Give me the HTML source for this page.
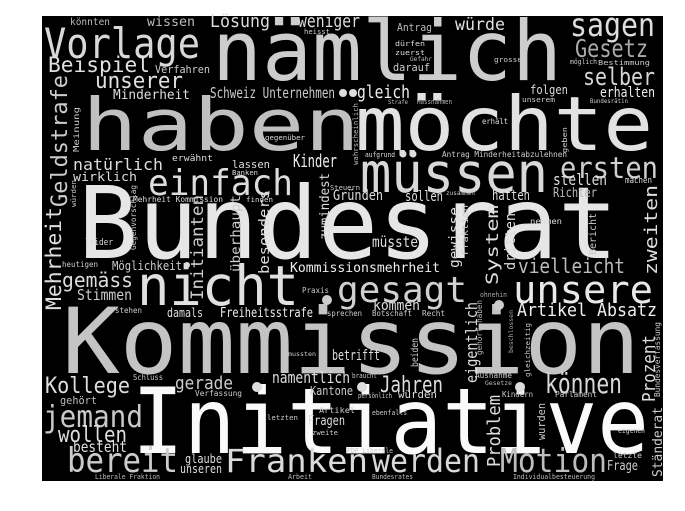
<!DOCTYPE html>
<html><head><meta charset="utf-8"><style>
html,body{margin:0;padding:0;background:#fff;width:685px;height:511px;overflow:hidden}
svg{display:block}
text{font-family:"DejaVu Sans Mono","Liberation Mono",monospace;}
</style></head><body>
<svg width="685" height="511" viewBox="0 0 685 511" xmlns="http://www.w3.org/2000/svg">
<rect x="0" y="0" width="685" height="511" fill="#fff"/>
<rect x="42" y="16" width="621" height="465" fill="#000"/>
<g lengthAdjust="spacingAndGlyphs">
<!-- big words -->
<text x="78" y="258" font-size="100" fill="#e6e6e6" textLength="540" lengthAdjust="spacingAndGlyphs">Bundesrat</text>
<text x="62" y="373" font-size="91" fill="#c4c4c4" textLength="578" lengthAdjust="spacingAndGlyphs">Kommission</text>
<text x="132" y="453" font-size="91" fill="#fafafa" textLength="517" lengthAdjust="spacingAndGlyphs">Initiative</text>
<text x="82" y="150" font-size="72" fill="#c0c0c0" textLength="278" lengthAdjust="spacingAndGlyphs">haben</text>
<text x="355" y="150" font-size="75" fill="#e2e2e2" textLength="298" lengthAdjust="spacingAndGlyphs">möchte</text>
<text x="212" y="80" font-size="83" fill="#cdcdcd" textLength="350" lengthAdjust="spacingAndGlyphs">nämlich</text>
<text x="360" y="192" font-size="55" fill="#d8d8d8" textLength="188" lengthAdjust="spacingAndGlyphs">müssen</text>
<text x="137" y="305" font-size="55" fill="#e0e0e0" textLength="162" lengthAdjust="spacingAndGlyphs">nicht</text>
<text x="337" y="302" font-size="36" fill="#d0d0d0" textLength="130" lengthAdjust="spacingAndGlyphs">gesagt</text>
<text x="513" y="303" font-size="38" fill="#e8e8e8" textLength="140" lengthAdjust="spacingAndGlyphs">unsere</text>
<text x="148" y="195" font-size="36" fill="#dcdcdc" textLength="145" lengthAdjust="spacingAndGlyphs">einfach</text>
<text x="44" y="58" font-size="42" fill="#d8d8d8" textLength="156" lengthAdjust="spacingAndGlyphs">Vorlage</text>
<text x="570" y="36" font-size="32" fill="#dcdcdc" textLength="85" lengthAdjust="spacingAndGlyphs">sagen</text>
<text x="560" y="178" font-size="29" fill="#cfcfcf" textLength="98" lengthAdjust="spacingAndGlyphs">ersten</text>
<text x="67" y="472" font-size="34" fill="#cccccc" textLength="111" lengthAdjust="spacingAndGlyphs">bereit</text>
<text x="225" y="472" font-size="32" fill="#dadada" textLength="143" lengthAdjust="spacingAndGlyphs">Franken</text>
<text x="372" y="472" font-size="32" fill="#d8d8d8" textLength="108" lengthAdjust="spacingAndGlyphs">werden</text>
<text x="500" y="472" font-size="33" fill="#bdbdbd" textLength="107" lengthAdjust="spacingAndGlyphs">Motion</text>
<text x="43" y="427" font-size="30" fill="#c8c8c8" textLength="100" lengthAdjust="spacingAndGlyphs">jemand</text>
<text x="545" y="393" font-size="28" fill="#d8d8d8" textLength="77" lengthAdjust="spacingAndGlyphs">können</text>
<!-- medium -->
<text x="575" y="57" font-size="25" fill="#aaaaaa" textLength="73" lengthAdjust="spacingAndGlyphs">Gesetz</text>
<text x="583" y="85" font-size="24" fill="#d4d4d4" textLength="72" lengthAdjust="spacingAndGlyphs">selber</text>
<text x="48" y="72" font-size="21" fill="#e0e0e0" textLength="102" lengthAdjust="spacingAndGlyphs">Beispiel</text>
<text x="95" y="88" font-size="22" fill="#e0e0e0" textLength="88" lengthAdjust="spacingAndGlyphs">unserer</text>
<text x="210" y="27" font-size="18" fill="#dcdcdc" textLength="60" lengthAdjust="spacingAndGlyphs">Lösung</text>
<text x="298" y="27" font-size="18" fill="#dcdcdc" textLength="62" lengthAdjust="spacingAndGlyphs">weniger</text>
<text x="455" y="30" font-size="17" fill="#e0e0e0" textLength="50" lengthAdjust="spacingAndGlyphs">würde</text>
<text x="147" y="26" font-size="13" fill="#bbbbbb" textLength="48" lengthAdjust="spacingAndGlyphs">wissen</text>
<text x="70" y="25" font-size="10" fill="#bbbbbb" textLength="40" lengthAdjust="spacingAndGlyphs">könnten</text>
<text x="397" y="31" font-size="11" fill="#bbbbbb" textLength="35" lengthAdjust="spacingAndGlyphs">Antrag</text>
<text x="304" y="34" font-size="7" fill="#cccccc" textLength="26" lengthAdjust="spacingAndGlyphs">heisst</text>
<text x="155" y="73" font-size="11" fill="#cccccc" textLength="55" lengthAdjust="spacingAndGlyphs">Verfahren</text>
<text x="113" y="99" font-size="13" fill="#dddddd" textLength="77" lengthAdjust="spacingAndGlyphs">Minderheit</text>
<text x="210" y="98" font-size="15" fill="#cccccc" textLength="125" lengthAdjust="spacingAndGlyphs">Schweiz Unternehmen</text>
<circle cx="343" cy="93" r="4" fill="#ddd"/><circle cx="353" cy="93" r="4" fill="#ddd"/>
<text x="357" y="98" font-size="18" fill="#eeeeee" textLength="53" lengthAdjust="spacingAndGlyphs">gleich</text>
<text x="388" y="104" font-size="6" fill="#bbbbbb" textLength="20" lengthAdjust="spacingAndGlyphs">Strafe</text>
<text x="417" y="104" font-size="7" fill="#bbbbbb" textLength="35" lengthAdjust="spacingAndGlyphs">Massnahmen</text>
<text x="530" y="94" font-size="12" fill="#dddddd" textLength="38" lengthAdjust="spacingAndGlyphs">folgen</text>
<text x="522" y="102" font-size="7" fill="#cccccc" textLength="33" lengthAdjust="spacingAndGlyphs">unserem</text>
<text x="600" y="97" font-size="14" fill="#eeeeee" textLength="55" lengthAdjust="spacingAndGlyphs">erhalten</text>
<text x="590" y="103" font-size="6" fill="#cccccc" textLength="38" lengthAdjust="spacingAndGlyphs">Bundesrätin</text>
<text x="395" y="46" font-size="7" fill="#dddddd" textLength="30" lengthAdjust="spacingAndGlyphs">dürfen</text>
<text x="395" y="55" font-size="7" fill="#dddddd" textLength="30" lengthAdjust="spacingAndGlyphs">zuerst</text>
<text x="410" y="61" font-size="6" fill="#bbbbbb" textLength="22" lengthAdjust="spacingAndGlyphs">Gefahr</text>
<text x="393" y="71" font-size="11" fill="#cccccc" textLength="37" lengthAdjust="spacingAndGlyphs">darauf</text>
<text x="494" y="62" font-size="7" fill="#cccccc" textLength="28" lengthAdjust="spacingAndGlyphs">grosse</text>
<text x="570" y="64" font-size="7" fill="#cccccc" textLength="27" lengthAdjust="spacingAndGlyphs">möglich</text>
<text x="598" y="65" font-size="7" fill="#cccccc" textLength="52" lengthAdjust="spacingAndGlyphs">Bestimmung</text>
<text x="73" y="170" font-size="16" fill="#dddddd" textLength="90" lengthAdjust="spacingAndGlyphs">natürlich</text>
<text x="73" y="181" font-size="12" fill="#dddddd" textLength="64" lengthAdjust="spacingAndGlyphs">wirklich</text>
<text x="172" y="161" font-size="9" fill="#dddddd" textLength="41" lengthAdjust="spacingAndGlyphs">erwähnt</text>
<text x="232" y="168" font-size="11" fill="#dddddd" textLength="38" lengthAdjust="spacingAndGlyphs">lassen</text>
<text x="232" y="175" font-size="7" fill="#dddddd" textLength="26" lengthAdjust="spacingAndGlyphs">Banken</text>
<text x="293" y="167" font-size="18" fill="#eeeeee" textLength="44" lengthAdjust="spacingAndGlyphs">Kinder</text>
<text x="265" y="140" font-size="7" fill="#dddddd" textLength="40" lengthAdjust="spacingAndGlyphs">gegenüber</text>
<text x="133" y="202" font-size="8" fill="#dddddd" textLength="90" lengthAdjust="spacingAndGlyphs">Mehrheit Kommission</text>
<text x="246" y="202" font-size="7" fill="#dddddd" textLength="27" lengthAdjust="spacingAndGlyphs">finden</text>
<text x="85" y="245" font-size="9" fill="#dddddd" textLength="28" lengthAdjust="spacingAndGlyphs">leider</text>
<text x="330" y="190" font-size="7" fill="#cccccc" textLength="30" lengthAdjust="spacingAndGlyphs">Steuern</text>
<text x="333" y="200" font-size="14" fill="#dddddd" textLength="50" lengthAdjust="spacingAndGlyphs">Gründen</text>
<text x="405" y="201" font-size="14" fill="#dddddd" textLength="38" lengthAdjust="spacingAndGlyphs">sollen</text>
<text x="446" y="195" font-size="6" fill="#cccccc" textLength="29" lengthAdjust="spacingAndGlyphs">zusammen</text>
<text x="492" y="200" font-size="14" fill="#dddddd" textLength="38" lengthAdjust="spacingAndGlyphs">hätten</text>
<text x="553" y="197" font-size="13" fill="#bbbbbb" textLength="44" lengthAdjust="spacingAndGlyphs">Richter</text>
<text x="553" y="185" font-size="16" fill="#dddddd" textLength="54" lengthAdjust="spacingAndGlyphs">stellen</text>
<text x="625" y="183" font-size="9" fill="#dddddd" textLength="27" lengthAdjust="spacingAndGlyphs">machen</text>
<text x="365" y="157" font-size="7" fill="#dddddd" textLength="30" lengthAdjust="spacingAndGlyphs">aufgrund</text>
<circle cx="403" cy="154" r="3.5" fill="#ddd"/><circle cx="413" cy="154" r="3.5" fill="#ddd"/>
<text x="442" y="157" font-size="8" fill="#cccccc" textLength="125" lengthAdjust="spacingAndGlyphs">Antrag Minderheitabzulehnen</text>
<text x="482" y="124" font-size="8" fill="#dddddd" textLength="26" lengthAdjust="spacingAndGlyphs">erhält</text>
<text x="530" y="224" font-size="8" fill="#dddddd" textLength="32" lengthAdjust="spacingAndGlyphs">nehmen</text>
<text x="372" y="247" font-size="15" fill="#dddddd" textLength="46" lengthAdjust="spacingAndGlyphs">müsste</text>
<text x="290" y="272" font-size="13" fill="#eeeeee" textLength="150" lengthAdjust="spacingAndGlyphs">Kommissionsmehrheit</text>
<text x="518" y="273" font-size="20" fill="#bbbbbb" textLength="107" lengthAdjust="spacingAndGlyphs">vielleicht</text>
<text x="480" y="297" font-size="7" fill="#aaaaaa" textLength="27" lengthAdjust="spacingAndGlyphs">ohnehin</text>
<circle cx="499" cy="305" r="5" fill="#ccc"/>
<circle cx="327" cy="300" r="5" fill="#ccc"/>
<text x="373" y="310" font-size="14" fill="#dddddd" textLength="47" lengthAdjust="spacingAndGlyphs">kommen</text>
<text x="517" y="316" font-size="18" fill="#eeeeee" textLength="140" lengthAdjust="spacingAndGlyphs">Artikel Absatz</text>
<text x="327" y="316" font-size="8" fill="#cccccc" textLength="35" lengthAdjust="spacingAndGlyphs">sprechen</text>
<text x="372" y="316" font-size="8" fill="#cccccc" textLength="40" lengthAdjust="spacingAndGlyphs">Botschaft</text>
<text x="422" y="316" font-size="8" fill="#cccccc" textLength="23" lengthAdjust="spacingAndGlyphs">Recht</text>
<text x="332" y="360" font-size="14" fill="#dddddd" textLength="48" lengthAdjust="spacingAndGlyphs">betrifft</text>
<text x="288" y="356" font-size="6" fill="#cccccc" textLength="28" lengthAdjust="spacingAndGlyphs">mussten</text>
<circle cx="362" cy="387" r="5" fill="#ddd"/><circle cx="520" cy="387" r="5" fill="#ddd"/><circle cx="257" cy="387" r="5" fill="#ddd"/><circle cx="187" cy="265" r="3" fill="#ddd"/>
<text x="352" y="378" font-size="7" fill="#cccccc" textLength="25" lengthAdjust="spacingAndGlyphs">braucht</text>
<text x="380" y="392" font-size="22" fill="#dddddd" textLength="63" lengthAdjust="spacingAndGlyphs">Jahren</text>
<text x="475" y="378" font-size="8" fill="#cccccc" textLength="37" lengthAdjust="spacingAndGlyphs">Ausnahme</text>
<text x="485" y="385" font-size="6" fill="#bbbbbb" textLength="27" lengthAdjust="spacingAndGlyphs">Gesetze</text>
<text x="358" y="398" font-size="7" fill="#cccccc" textLength="34" lengthAdjust="spacingAndGlyphs">persönlich</text>
<text x="398" y="398" font-size="11" fill="#dddddd" textLength="39" lengthAdjust="spacingAndGlyphs">würden</text>
<text x="502" y="397" font-size="8" fill="#cccccc" textLength="31" lengthAdjust="spacingAndGlyphs">Kindern</text>
<text x="555" y="397" font-size="8" fill="#cccccc" textLength="42" lengthAdjust="spacingAndGlyphs">Parlament</text>
<text x="618" y="433" font-size="7" fill="#cccccc" textLength="27" lengthAdjust="spacingAndGlyphs">eigenen</text>
<text x="613" y="458" font-size="8" fill="#cccccc" textLength="29" lengthAdjust="spacingAndGlyphs">letzte</text>
<text x="607" y="470" font-size="13" fill="#cccccc" textLength="31" lengthAdjust="spacingAndGlyphs">Frage</text>
<text x="347" y="453" font-size="7" fill="#cccccc" textLength="46" lengthAdjust="spacingAndGlyphs">FDP Liberale</text>
<text x="372" y="415" font-size="7" fill="#cccccc" textLength="35" lengthAdjust="spacingAndGlyphs">ebenfalls</text>
<text x="319" y="413" font-size="8" fill="#cccccc" textLength="36" lengthAdjust="spacingAndGlyphs">Artikel</text>
<text x="308" y="425" font-size="13" fill="#dddddd" textLength="37" lengthAdjust="spacingAndGlyphs">Fragen</text>
<text x="267" y="420" font-size="7" fill="#cccccc" textLength="31" lengthAdjust="spacingAndGlyphs">letzten</text>
<text x="312" y="435" font-size="7" fill="#cccccc" textLength="26" lengthAdjust="spacingAndGlyphs">zweite</text>
<text x="310" y="395" font-size="12" fill="#cccccc" textLength="43" lengthAdjust="spacingAndGlyphs">Kantone</text>
<text x="272" y="383" font-size="16" fill="#dddddd" textLength="78" lengthAdjust="spacingAndGlyphs">namentlich</text>
<text x="175" y="389" font-size="18" fill="#cccccc" textLength="58" lengthAdjust="spacingAndGlyphs">gerade</text>
<text x="195" y="396" font-size="8" fill="#cccccc" textLength="47" lengthAdjust="spacingAndGlyphs">Verfassung</text>
<text x="133" y="380" font-size="8" fill="#cccccc" textLength="30" lengthAdjust="spacingAndGlyphs">Schluss</text>
<text x="45" y="393" font-size="22" fill="#dddddd" textLength="85" lengthAdjust="spacingAndGlyphs">Kollege</text>
<text x="60" y="404" font-size="11" fill="#bbbbbb" textLength="37" lengthAdjust="spacingAndGlyphs">gehört</text>
<text x="58" y="442" font-size="22" fill="#dddddd" textLength="69" lengthAdjust="spacingAndGlyphs">wollen</text>
<text x="73" y="452" font-size="15" fill="#dddddd" textLength="54" lengthAdjust="spacingAndGlyphs">besteht</text>
<text x="185" y="463" font-size="12" fill="#dddddd" textLength="37" lengthAdjust="spacingAndGlyphs">glaube</text>
<text x="180" y="473" font-size="12" fill="#dddddd" textLength="42" lengthAdjust="spacingAndGlyphs">unseren</text>
<text x="95" y="479" font-size="7" fill="#bbbbbb" textLength="65" lengthAdjust="spacingAndGlyphs">Liberale Fraktion</text>
<text x="288" y="479" font-size="7" fill="#bbbbbb" textLength="24" lengthAdjust="spacingAndGlyphs">Arbeit</text>
<text x="372" y="479" font-size="7" fill="#bbbbbb" textLength="41" lengthAdjust="spacingAndGlyphs">Bundesrates</text>
<text x="513" y="479" font-size="7" fill="#bbbbbb" textLength="82" lengthAdjust="spacingAndGlyphs">Individualbesteuerung</text>
<text x="167" y="317" font-size="12" fill="#dddddd" textLength="36" lengthAdjust="spacingAndGlyphs">damals</text>
<text x="220" y="317" font-size="13" fill="#eeeeee" textLength="93" lengthAdjust="spacingAndGlyphs">Freiheitsstrafe</text>
<text x="115" y="313" font-size="8" fill="#cccccc" textLength="27" lengthAdjust="spacingAndGlyphs">stehen</text>
<text x="302" y="293" font-size="8" fill="#cccccc" textLength="27" lengthAdjust="spacingAndGlyphs">Praxis</text>
<text x="77" y="300" font-size="15" fill="#cccccc" textLength="55" lengthAdjust="spacingAndGlyphs">Stimmen</text>
<text x="62" y="287" font-size="20" fill="#dddddd" textLength="71" lengthAdjust="spacingAndGlyphs">gemäss</text>
<text x="62" y="267" font-size="8" fill="#cccccc" textLength="36" lengthAdjust="spacingAndGlyphs">heutigen</text>
<text x="112" y="270" font-size="12" fill="#cccccc" textLength="70" lengthAdjust="spacingAndGlyphs">Möglichkeit</text>
<text x="295" y="272" font-size="13" fill="#eeeeee" textLength="0" lengthAdjust="spacingAndGlyphs"></text>
<!-- vertical words: translate to baseline (right edge), bottom -->
<text transform="translate(67,207) rotate(-90)" font-size="22" fill="#cccccc" textLength="132" lengthAdjust="spacingAndGlyphs">Geldstrafe</text>
<text transform="translate(61,310) rotate(-90)" font-size="21" fill="#dddddd" textLength="103" lengthAdjust="spacingAndGlyphs">Mehrheit</text>
<text transform="translate(79,152) rotate(-90)" font-size="8" fill="#cccccc" textLength="45" lengthAdjust="spacingAndGlyphs">Meinung</text>
<text transform="translate(76,207) rotate(-90)" font-size="7" fill="#cccccc" textLength="27" lengthAdjust="spacingAndGlyphs">würden</text>
<text transform="translate(136,250) rotate(-90)" font-size="8" fill="#cccccc" textLength="65" lengthAdjust="spacingAndGlyphs">Gegenvorschlag</text>
<text transform="translate(203,300) rotate(-90)" font-size="17" fill="#cccccc" textLength="105" lengthAdjust="spacingAndGlyphs">Initianten</text>
<text transform="translate(240,272) rotate(-90)" font-size="13" fill="#cccccc" textLength="77" lengthAdjust="spacingAndGlyphs">überhaupt</text>
<text transform="translate(269,274) rotate(-90)" font-size="14" fill="#dddddd" textLength="84" lengthAdjust="spacingAndGlyphs">besonders</text>
<text transform="translate(329,240) rotate(-90)" font-size="13" fill="#dddddd" textLength="67" lengthAdjust="spacingAndGlyphs">zumindest</text>
<text transform="translate(358,165) rotate(-90)" font-size="7" fill="#bbbbbb" textLength="62" lengthAdjust="spacingAndGlyphs">wahrscheinlich</text>
<text transform="translate(567,153) rotate(-90)" font-size="7" fill="#cccccc" textLength="26" lengthAdjust="spacingAndGlyphs">geben</text>
<text transform="translate(459,268) rotate(-90)" font-size="14" fill="#dddddd" textLength="61" lengthAdjust="spacingAndGlyphs">gewisse</text>
<text transform="translate(468,255) rotate(-90)" font-size="9" fill="#cccccc" textLength="50" lengthAdjust="spacingAndGlyphs">Fraktion</text>
<text transform="translate(498,285) rotate(-90)" font-size="17" fill="#dddddd" textLength="80" lengthAdjust="spacingAndGlyphs">System</text>
<text transform="translate(515,270) rotate(-90)" font-size="14" fill="#dddddd" textLength="57" lengthAdjust="spacingAndGlyphs">dritten</text>
<text transform="translate(596,255) rotate(-90)" font-size="10" fill="#cccccc" textLength="42" lengthAdjust="spacingAndGlyphs">Bericht</text>
<text transform="translate(657,275) rotate(-90)" font-size="18" fill="#dddddd" textLength="90" lengthAdjust="spacingAndGlyphs">zweiten</text>
<text transform="translate(477,383) rotate(-90)" font-size="16" fill="#dddddd" textLength="81" lengthAdjust="spacingAndGlyphs">eigentlich</text>
<text transform="translate(482,355) rotate(-90)" font-size="8" fill="#bbbbbb" textLength="55" lengthAdjust="spacingAndGlyphs">gehört haben</text>
<text transform="translate(513,353) rotate(-90)" font-size="6" fill="#aaaaaa" textLength="43" lengthAdjust="spacingAndGlyphs">beschlossen</text>
<text transform="translate(530,377) rotate(-90)" font-size="7" fill="#cccccc" textLength="54" lengthAdjust="spacingAndGlyphs">gleichzeitig</text>
<text transform="translate(655,402) rotate(-90)" font-size="18" fill="#dddddd" textLength="67" lengthAdjust="spacingAndGlyphs">Prozent</text>
<text transform="translate(660,397) rotate(-90)" font-size="8" fill="#cccccc" textLength="75" lengthAdjust="spacingAndGlyphs">Bundesverfassung</text>
<text transform="translate(418,367) rotate(-90)" font-size="10" fill="#cccccc" textLength="29" lengthAdjust="spacingAndGlyphs">beiden</text>
<text transform="translate(500,467) rotate(-90)" font-size="18" fill="#dddddd" textLength="72" lengthAdjust="spacingAndGlyphs">Problem</text>
<text transform="translate(545,440) rotate(-90)" font-size="11" fill="#cccccc" textLength="37" lengthAdjust="spacingAndGlyphs">wurden</text>
<text transform="translate(662,477) rotate(-90)" font-size="13" fill="#cccccc" textLength="70" lengthAdjust="spacingAndGlyphs">Ständerat</text>
</g>
</svg>
</body></html>
